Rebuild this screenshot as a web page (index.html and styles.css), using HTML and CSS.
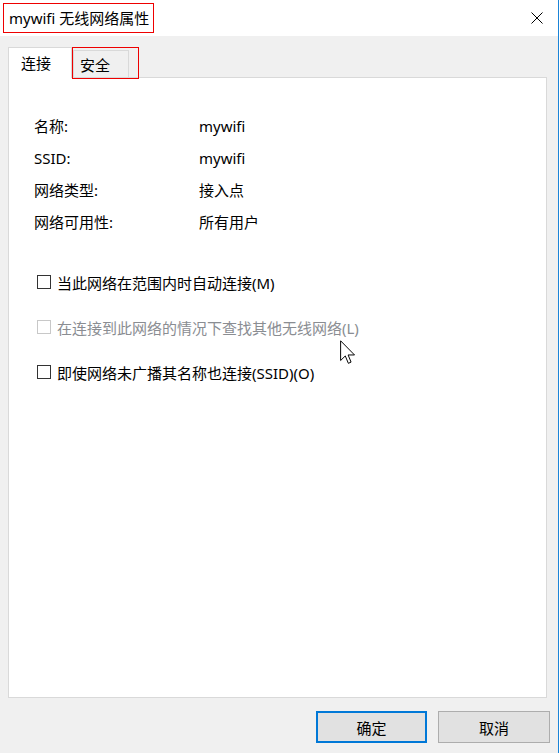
FILE: index.html
```html
<!DOCTYPE html>
<html lang="zh-CN">
<head>
<meta charset="utf-8">
<title>mywifi 无线网络属性</title>
<link rel="stylesheet" href="styles.css">
</head>
<body>
<div class="window">
  <div class="titlebar">
    <span class="title">mywifi 无线网络属性</span>
    <svg class="close" width="12" height="12" viewBox="0 0 12 12"><path d="M0.5 0.5 L11.5 11.5 M11.5 0.5 L0.5 11.5" stroke="#000" stroke-width="1" fill="none"/></svg>
  </div>
  <div class="tabs">
    <div class="tab active">连接</div>
    <div class="tab">安全</div>
    <span class="mark"></span>
  </div>
  <div class="panel">
    <div class="info">
      <span>名称:</span><span>mywifi</span>
      <span>SSID:</span><span>mywifi</span>
      <span>网络类型:</span><span>接入点</span>
      <span>网络可用性:</span><span>所有用户</span>
    </div>
    <div class="checks">
      <label class="check"><span class="box"></span>当此网络在范围内时自动连接(M)</label>
      <label class="check disabled"><span class="box"></span>在连接到此网络的情况下查找其他无线网络(L)</label>
      <label class="check"><span class="box"></span>即使网络未广播其名称也连接(SSID)(O)</label>
    </div>
  </div>
  <div class="buttons">
    <button class="btn default">确定</button>
    <button class="btn">取消</button>
  </div>
  <svg class="cursor" width="16" height="25" viewBox="0 0 13 20"><path d="M0.5 0.5 L0.5 16.5 L4.3 12.8 L6.8 18.8 L9 17.8 L6.6 12 L11.8 12 Z" fill="#fff" stroke="#000" stroke-width="0.8" stroke-linejoin="miter"/></svg>
</div>
</body>
</html>
```
FILE: styles.css
```css
html { background: #fff; }
body {
  margin: 0;
  width: 560px;
  height: 753px;
  font-family: "Noto Sans", "Noto Sans CJK SC", sans-serif;
  font-size: 15px;
  color: #000;
}
.window {
  position: relative;
  width: 558px;
  height: 753px;
  background: #f0f0f0;
  border-right: 1px solid #1a84d8;
}
.titlebar {
  height: 36px;
  background: #fff;
  display: flex;
  align-items: center;
}
.title {
  margin-left: 3px;
  height: 30px;
  box-sizing: border-box;
  border: 1px solid #ee0000;
  padding: 0 4px 0 5px;
  line-height: 28px;
  font-size: 15px;
  white-space: nowrap;
}
.close {
  margin-left: auto;
  margin-right: 15px;
}
.tabs {
  position: relative;
  margin: 11px 0 -1px 8px;
  height: 31px;
  display: flex;
  align-items: flex-end;
}
.tab {
  box-sizing: border-box;
  border: 1px solid #d9d9d9;
  border-bottom: none;
  line-height: 26px;
}
.tab.active {
  position: relative;
  z-index: 1;
  width: 64px;
  height: 31px;
  padding-left: 12px;
  background: #fff;
  line-height: 30px;
}
.tab:not(.active) {
  width: 56px;
  height: 27px;
  margin-left: 1px;
  margin-bottom: 1px;
  padding-left: 6px;
  padding-top: 1px;
  background: #f0f0f0;
}
.mark {
  position: absolute;
  left: 64px;
  top: 0;
  width: 67px;
  height: 32px;
  box-sizing: border-box;
  border: 1px solid #ee0000;
  z-index: 2;
}
.panel {
  margin-left: 8px;
  width: 539px;
  height: 621px;
  box-sizing: border-box;
  background: #fff;
  border: 1px solid #d9d9d9;
  padding: 32px 0 0 25px;
}
.info {
  display: grid;
  grid-template-columns: 165px 1fr;
  grid-auto-rows: 32px;
  line-height: 32px;
}
.checks {
  margin-top: 28px;
  display: flex;
  flex-direction: column;
  gap: 13px;
}
.check {
  display: flex;
  align-items: center;
  height: 32px;
  padding-left: 3px;
}
.box {
  width: 14px;
  height: 14px;
  box-sizing: border-box;
  border: 1px solid #333;
  background: #fff;
  margin-right: 6px;
}
.check.disabled { color: #8a8d92; }
.check.disabled .box { border-color: #c8c8c8; }
.buttons {
  margin-top: 13px;
  padding-right: 8px;
  display: flex;
  justify-content: flex-end;
  gap: 11px;
}
.btn {
  width: 112px;
  height: 32px;
  box-sizing: border-box;
  background: #e1e1e1;
  border: 1px solid #adadad;
  font-family: inherit;
  font-size: 15px;
  color: #000;
  padding: 0;
}
.btn.default {
  width: 111px;
  border: 2px solid #0078d7;
}
.cursor {
  position: absolute;
  left: 340px;
  top: 340px;
}
```
